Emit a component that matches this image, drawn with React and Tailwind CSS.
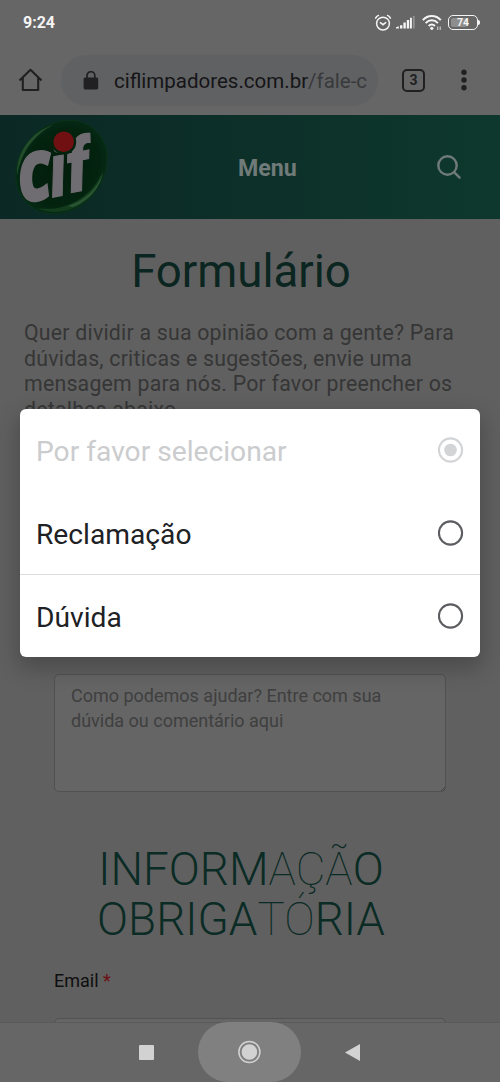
const options = [
  { label: 'Por favor selecionar', disabled: true, checked: true },
  { label: 'Reclamação' },
  { label: 'Dúvida' },
]

function StatusBar() {
  return (
    <div className="h-[45px] shrink-0 flex items-center justify-between pl-[23px] pr-[20px] text-[#f4f4f4]">
      <span className="text-[16px] font-bold pt-px">9:24</span>
      <div className="flex items-center">
        <svg width="18" height="18" viewBox="0 0 18 18" fill="none" stroke="currentColor" strokeWidth="1.5" strokeLinecap="round">
          <circle cx="9" cy="9.6" r="6.4" />
          <path d="M6.4 8.6 9 10.7l2.7-2.1M1.6 4.1c.6-1.3 1.6-2.2 2.9-2.7M16.4 4.1c-.6-1.3-1.6-2.2-2.9-2.7" />
        </svg>
        <svg className="ml-[4px] mb-px" width="19" height="14" viewBox="0 0 19 14" fill="currentColor">
          <path d="M0 13.5v-1.2l2.8-1v2.2zM4 10.2h2.4v3.3H4zM7.4 7.6h2.4v5.9H7.4zM10.8 5h2.4v8.5h-2.4z" />
          <path d="M14 2.8h1.9v10.7H14z" />
          <path d="M16.9 1h1.8v12.5h-1.8z" opacity=".3" />
        </svg>
        <svg className="ml-[7px]" width="21" height="17" viewBox="0 0 21 17" fill="none" stroke="currentColor" strokeWidth="2">
          <path d="M.8 6.1c5-5.5 13-5.5 18 0M3.7 9.1c3.4-3.7 8.8-3.7 12.2 0M6.7 12c1.8-1.9 4.4-1.9 6.2 0" />
          <circle cx="9.8" cy="14.3" r="1.6" fill="currentColor" stroke="none" />
          <path d="M15.7 12.5v3.5M18.2 12.5v3.5" strokeWidth="1.2" opacity=".7" />
        </svg>
        <div className="ml-[5px] flex items-center">
          <div className="relative w-[30px] h-[15px] rounded-[5px] border-[1.5px] border-current flex items-center justify-center">
            <span className="absolute left-[2px] top-[2px] bottom-[2px] w-[16px] rounded-[2px] bg-[#8d8d8d]" />
            <span className="relative text-[10.5px] leading-none font-bold pt-px">74</span>
          </div>
          <span className="w-[2px] h-[5px] rounded-r-sm bg-current" />
        </div>
      </div>
    </div>
  )
}

function BrowserBar() {
  return (
    <div className="h-[70px] shrink-0 flex items-center pl-[18px] pr-[33px] text-[#202022]">
      <svg width="25" height="24" viewBox="0 0 25 24" fill="none" stroke="currentColor" strokeWidth="2.1">
        <path d="M1.5 12.6 12.5 1.8l11 10.8M4.8 9.8V22h15.4V9.8" strokeLinejoin="round" />
      </svg>
      <div className="ml-[18px] w-[317px] h-[51px] rounded-full bg-[#606163] flex items-center pl-[22px]">
        <svg width="16" height="19" viewBox="0 0 16 19">
          <rect x=".6" y="6.4" width="14.6" height="12" rx="1.6" fill="currentColor" />
          <path d="M4 7V4.6a3.9 3.9 0 0 1 7.8 0V7" fill="none" stroke="currentColor" strokeWidth="1.7" />
        </svg>
        <span className="ml-[15px] pt-[2px] text-[20.5px] whitespace-nowrap text-[#151517]">
          ciflimpadores.com.br<span className="text-[#38393b]">/fale-c</span>
        </span>
      </div>
      <div className="ml-[24px] w-[23px] h-[23px] border-2 border-current rounded-[5px] flex items-center justify-center text-[14px] leading-none font-bold">3</div>
      <svg className="ml-auto" width="6" height="22" viewBox="0 0 6 22" fill="currentColor">
        <circle cx="3" cy="3.2" r="2.7" />
        <circle cx="3" cy="11" r="2.7" />
        <circle cx="3" cy="18.8" r="2.7" />
      </svg>
    </div>
  )
}

function CifLogo() {
  return (
    <svg width="110" height="103" viewBox="0 0 110 103" className="overflow-visible">
      <defs>
        <radialGradient id="leaf" cx=".5" cy=".5" r=".55">
          <stop offset="0" stopColor="#021d0b" />
          <stop offset=".75" stopColor="#03230f" />
          <stop offset="1" stopColor="#062d18" />
        </radialGradient>
      </defs>
      <g transform="rotate(-48 61.5 51)">
        <ellipse cx="61.5" cy="51" rx="50" ry="42" fill="url(#leaf)" stroke="#0a3219" strokeWidth="1" />
      </g>
      <path d="M17 60C16 36 31 16 53 9 34 19 21 36 17 60Z" fill="#234c2b" />
      <path d="M38 92c27 5 56-12 65-38-3 22-23 41-46 42-8 0-15-1-19-4Z" fill="#123c1c" />
      <path d="M68 90c16-5 29-17 35-33-3 16-16 29-30 34Z" fill="#2a5432" />
      <g fill="#706d72" stroke="#706d72" fontStyle="italic">
        <text transform="translate(21 87) rotate(-7) skewY(-4) scale(.8 1)" fontSize="65" fontFamily="Open Sans" fontWeight="800" strokeWidth="3">C</text>
        <text transform="translate(52 81.5) rotate(-7) skewY(-4) scale(.72 1)" fontSize="72" fontFamily="Open Sans" fontWeight="800" strokeWidth="1.2">i</text>
        <text transform="translate(69.5 77) rotate(-7) skewY(-4) scale(.88 1)" fontSize="73" fontFamily="Roboto" fontWeight="900" strokeWidth="1.2">f</text>
      </g>
      <circle cx="63.7" cy="26" r="12.5" fill="#03220e" />
      <circle cx="63.7" cy="25.8" r="10.3" fill="#701012" />
    </svg>
  )
}

function SiteHeader() {
  return (
    <header className="h-[104px] shrink-0 flex items-center bg-linear-to-r from-[#0b2825] to-[#0e382d]">
      <CifLogo />
      <span className="ml-[128px] pt-[3px] text-[23.2px] font-bold text-[#707b79]">Menu</span>
      <svg className="ml-auto mr-[38px]" width="26" height="26" viewBox="0 0 26 26" fill="none" stroke="#707b79" strokeWidth="2.4" strokeLinecap="round">
        <circle cx="11.5" cy="11.5" r="9.2" />
        <path d="m18.3 18.3 5.3 5.3" />
      </svg>
    </header>
  )
}

function ContactForm() {
  return (
    <main className="h-[803px] shrink-0 overflow-hidden bg-[#606060] flex flex-col">
      <h1 className="mt-[26px] h-[54px] leading-[54px] text-center text-[45.6px] text-[#0b2520] pr-[18px]">Formulário</h1>
      <p className="mt-[21px] h-[102px] ml-[24px] text-[21.3px] tracking-[0.22px] leading-[25.5px] text-[#363636] whitespace-nowrap">
        Quer dividir a sua opinião com a gente? Para<br />
        dúvidas, criticas e sugestões, envie uma<br />
        mensagem para nós. Por favor preencher os<br />
        detalhes abaixo.
      </p>
      <div className="mt-[252px] mx-[54px] h-[118px] shrink-0 rounded-[5px] border border-[#515151] bg-[#656565] px-[16px] py-[8px] text-[18px] leading-[25px] text-[#3f3f3f] whitespace-nowrap relative">
        Como podemos ajudar? Entre com sua<br />
        dúvida ou comentário aqui
        <svg className="absolute right-0 bottom-0" width="4" height="4" stroke="#444" strokeWidth="1">
          <path d="M0 4 4 0M2 4l2-2" />
        </svg>
      </div>
      <h2 className="mt-[53px] pr-[18px] text-center text-[45.8px] leading-[50px] font-light text-[#0b2b25]">
        INFORM<span className="font-thin">AÇÃ</span>O<br />
        OBRIGA<span className="font-thin">TÓ</span>RIA
      </h2>
      <label className="mt-[24px] ml-[54px] text-[18px] leading-[24px] text-[#0f0f0f]">
        Email <span className="text-[#6c1014]">*</span>
      </label>
      <div className="mt-[25px] mx-[54px] h-[40px] shrink-0 rounded-[5px] border border-[#515151] bg-[#656565]" />
    </main>
  )
}

function NavBar() {
  return (
    <nav className="h-[60px] shrink-0 bg-[#666] shadow-[inset_0_1px_0_#5a5a5a] flex items-center justify-center pr-[2px] text-[#d2d2d2]">
      <span className="w-[15px] h-[15px] bg-current rounded-[1px]" />
      <div className="mx-[44px] w-[103px] h-[60px] rounded-full bg-[#808080] flex items-center justify-center">
        <svg width="24" height="24" viewBox="0 0 24 24">
          <circle cx="12.4" cy="12" r="10.5" fill="none" stroke="currentColor" strokeWidth="1.5" />
          <circle cx="12.4" cy="12" r="7.8" fill="currentColor" />
        </svg>
      </div>
      <svg width="15" height="17" viewBox="0 0 15 17" fill="currentColor">
        <path d="M15 0v17L0 8.5Z" />
      </svg>
    </nav>
  )
}

function Radio({ checked, disabled }) {
  return (
    <svg width="26" height="26" viewBox="0 0 26 26" className={disabled ? 'text-[#d3d4d6]' : 'text-[#5c5d61]'}>
      <circle cx="12.5" cy="13" r="11.6" fill="none" stroke="currentColor" strokeWidth="2.1" />
      {checked && <circle cx="12.5" cy="13" r="6.3" fill="currentColor" />}
    </svg>
  )
}

function SelectDialog() {
  return (
    <div className="absolute left-[20px] top-[409px] w-[460px] h-[248px] rounded-[6px] bg-white shadow-[0_9px_22px_3px_rgba(0,0,0,0.22)] flex flex-col">
      {options.map((option, i) => (
        <div
          key={option.label}
          className={`h-[83px] flex items-center justify-between px-[16px] ${i === 2 ? 'border-t border-[#dcdcdc]' : ''}`}
        >
          <span className={`text-[28.2px] leading-[34px] pt-[4px] ${option.disabled ? 'text-[#cbccce]' : 'text-[#202124]'}`}>
            {option.label}
          </span>
          <Radio checked={option.checked} disabled={option.disabled} />
        </div>
      ))}
    </div>
  )
}

export default function App() {
  return (
    <div className="relative w-[500px] h-[1082px] overflow-hidden flex flex-col bg-[#666] font-['Roboto',sans-serif]">
      <StatusBar />
      <BrowserBar />
      <SiteHeader />
      <ContactForm />
      <NavBar />
      <SelectDialog />
    </div>
  )
}
